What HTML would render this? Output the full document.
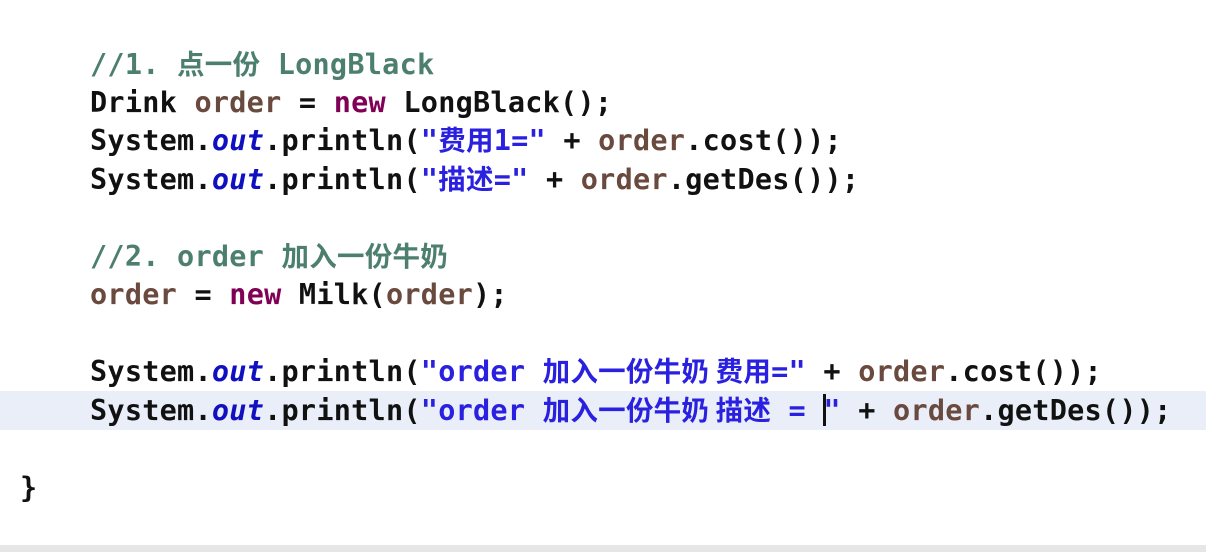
<!DOCTYPE html>
<html><head><meta charset="utf-8"><style>
html,body{margin:0;padding:0;width:1206px;height:552px;overflow:hidden;background:#fff}
.l{position:absolute;left:90px;white-space:pre;font-family:"DejaVu Sans Mono","Liberation Mono","Noto Sans CJK SC",monospace;font-weight:bold;font-size:28.5px;line-height:38px;height:38px;color:#111;letter-spacing:0.25px}
.l .z{font-family:"Noto Sans CJK SC","WenQuanYi Zen Hei",sans-serif;font-size:27.5px;line-height:0}
.c{color:#4d7f6f}
.k{color:#7f0055}
.v{color:#6a4a3e}
.o{color:#1010c0;font-style:italic}
.s{color:#2a20e0}
.cur{display:inline-block;width:3px;height:32px;background:#111;vertical-align:-6px;margin-right:-3px;line-height:0}
</style></head><body>
<div style="position:absolute;left:0;top:391px;width:1206px;height:39px;background:#e9eef8"></div>
<div style="position:absolute;left:0;top:545px;width:1206px;height:7px;background:#e6e6e6"></div>
<div class="l c" style="top:-37px">//  <span class="z">装饰者模式下的订单：2份巧克力+一份牛奶的</span>LongBlack</div>
<div class="l c" style="top:46px">//1. <span class="z">点一份</span> LongBlack</div>
<div class="l" style="top:84px">Drink <span class="v">order</span> = <span class="k">new</span> LongBlack();</div>
<div class="l" style="top:122px">System.<span class="o">out</span>.println(<span class="s">"<span class="z">费用</span>1="</span> + <span class="v">order</span>.cost());</div>
<div class="l" style="top:161px">System.<span class="o">out</span>.println(<span class="s">"<span class="z">描述</span>="</span> + <span class="v">order</span>.getDes());</div>
<div class="l c" style="top:238px">//2. order <span class="z">加入一份牛奶</span></div>
<div class="l" style="top:276px"><span class="v">order</span> = <span class="k">new</span> Milk(<span class="v">order</span>);</div>
<div class="l" style="top:353px">System.<span class="o">out</span>.println(<span class="s">"order <span class="z">加入一份牛奶 费用</span>="</span> + <span class="v">order</span>.cost());</div>
<div class="l" style="top:392px">System.<span class="o">out</span>.println(<span class="s">"order <span class="z">加入一份牛奶 描述</span> = <span class="cur"></span>"</span> + <span class="v">order</span>.getDes());</div>
<div class="l" style="top:469px;left:20px">}</div>
</body></html>
